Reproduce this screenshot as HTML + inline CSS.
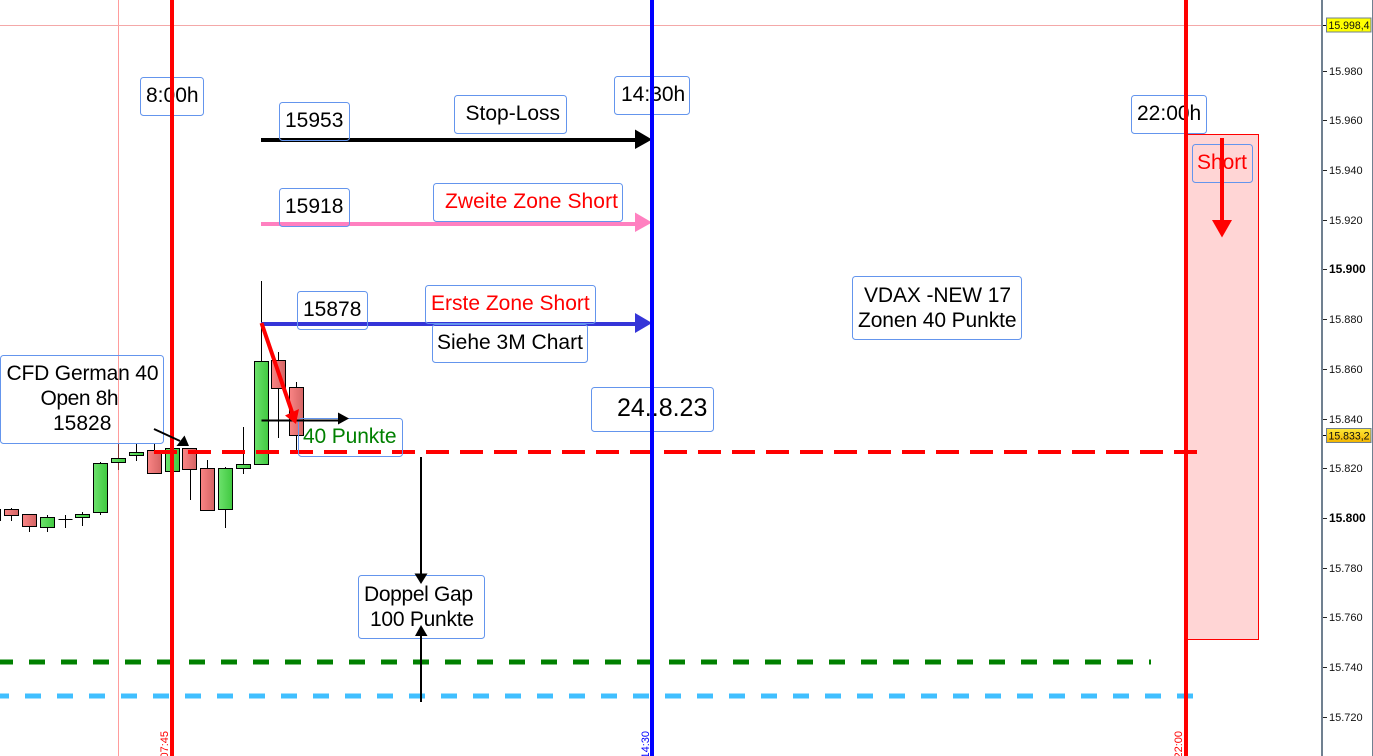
<!DOCTYPE html>
<html><head><meta charset="utf-8"><style>
html,body{margin:0;padding:0;background:#fff;width:1373px;height:756px;overflow:hidden}
svg{display:block;position:absolute;left:0;top:0}
text{font-family:"Liberation Sans",Arial,sans-serif}
.l{font-size:21px;fill:#000}
.r{font-size:21px;fill:#f00}
.a{font-size:11px;fill:#111}
.b{font-size:12px;fill:#000;font-weight:bold}
.box{fill:none;stroke:#6495ed;stroke-width:1}
.c{stroke:#000;stroke-width:1}
.w{stroke:#000;stroke-width:1}
</style></head><body>
<svg width="1373" height="756" viewBox="0 0 1373 756" xmlns="http://www.w3.org/2000/svg">
<defs>
<linearGradient id="gr" x1="0" x2="1" y1="0" y2="0"><stop offset="0" stop-color="#fa8585"/><stop offset="1" stop-color="#d46464"/></linearGradient>
<linearGradient id="gg" x1="0" x2="1" y1="0" y2="0"><stop offset="0" stop-color="#6ce26c"/><stop offset="1" stop-color="#40c840"/></linearGradient>
<linearGradient id="gy" x1="0" x2="0" y1="0" y2="1"><stop offset="0" stop-color="#ffe838"/><stop offset="1" stop-color="#f2b400"/></linearGradient>
</defs>

<!-- crosshair -->
<rect x="118" y="0" width="1" height="756" fill="#ff9c9c"/>
<rect x="0" y="25" width="1322" height="1" fill="#f4a8a8"/>

<!-- right rectangle -->
<rect x="1187.5" y="134.5" width="71" height="505" fill="#ffd5d5" stroke="#f00" stroke-width="1"/>

<!-- wicks -->
<g class="w">
<line x1="0.5" y1="509" x2="0.5" y2="521"/>
<line x1="11.5" y1="508" x2="11.5" y2="521"/>
<line x1="29.5" y1="515" x2="29.5" y2="532"/>
<line x1="47.5" y1="515" x2="47.5" y2="532"/>
<line x1="65.5" y1="515" x2="65.5" y2="528"/>
<line x1="82.5" y1="512" x2="82.5" y2="526"/>
<line x1="100.5" y1="462" x2="100.5" y2="515"/>
<line x1="118.5" y1="443" x2="118.5" y2="470" stroke="#8a3030"/>
<line x1="136.5" y1="443" x2="136.5" y2="461"/>
<line x1="154.5" y1="443" x2="154.5" y2="451"/>
<line x1="190.5" y1="449" x2="190.5" y2="500"/>
<line x1="207.5" y1="460" x2="207.5" y2="469"/>
<line x1="225.5" y1="467" x2="225.5" y2="528"/>
<line x1="243.5" y1="427" x2="243.5" y2="474"/>
<line x1="261.5" y1="281" x2="261.5" y2="362"/>
<line x1="278.5" y1="352" x2="278.5" y2="438"/>
<line x1="296.5" y1="382" x2="296.5" y2="450"/>
</g>
<!-- bodies -->
<g class="c">
<rect x="4.5" y="509.5" width="14" height="6" fill="url(#gr)"/>
<rect x="22.5" y="514.5" width="14" height="12" fill="url(#gr)"/>
<rect x="40.5" y="517.5" width="14" height="10" fill="url(#gg)"/>
<rect x="58.5" y="519" width="14" height="1" fill="#000" stroke="none"/>
<rect x="75.5" y="514.5" width="14" height="3" fill="url(#gg)"/>
<rect x="93.5" y="463.5" width="14" height="49" fill="url(#gg)"/>
<rect x="111.5" y="458.5" width="14" height="4" fill="url(#gg)"/>
<rect x="129.5" y="452.5" width="14" height="3" fill="url(#gg)"/>
<rect x="147.5" y="450.5" width="14" height="23" fill="url(#gr)"/>
<rect x="165.5" y="448.5" width="14" height="23" fill="url(#gg)"/>
<rect x="182.5" y="448.5" width="14" height="21" fill="url(#gr)"/>
<rect x="200.5" y="468.5" width="14" height="42" fill="url(#gr)"/>
<rect x="218.5" y="468.5" width="14" height="41" fill="url(#gg)"/>
<rect x="236.5" y="464.5" width="14" height="4" fill="url(#gg)"/>
<rect x="254.5" y="361.5" width="14" height="103" fill="url(#gg)"/>
<rect x="271.5" y="360.5" width="14" height="28" fill="url(#gr)"/>
<rect x="289.5" y="387.5" width="14" height="48" fill="url(#gr)"/>
</g>

<!-- dashed lines -->
<line x1="154" y1="452" x2="1197" y2="452" stroke="#f00" stroke-width="4" stroke-dasharray="23 11"/>
<line x1="-3" y1="662" x2="1151" y2="662" stroke="#008000" stroke-width="5" stroke-dasharray="16 16"/>
<line x1="-7" y1="696" x2="1193" y2="696" stroke="#40bfff" stroke-width="5" stroke-dasharray="16 16"/>

<!-- horizontal arrows -->
<rect x="261" y="138" width="376" height="4" fill="#000"/>
<polygon points="635,129.5 652,139.5 635,149" fill="#000"/>
<rect x="261" y="222" width="376" height="4" fill="#ff80c0"/>
<polygon points="635,212.5 652,222.5 635,232" fill="#ff80c0"/>
<rect x="261" y="322" width="376" height="4" fill="#3535d8"/>
<polygon points="635,313 652,323 635,333" fill="#3535d8"/>

<!-- boxes -->
<g class="box">
<rect x="140.5" y="77.5" width="63" height="38" rx="3"/>
<rect x="614.5" y="76.5" width="75" height="38" rx="3"/>
<rect x="1131.5" y="95.5" width="75" height="38" rx="3"/>
<rect x="279.5" y="102.5" width="70" height="38" rx="3"/>
<rect x="454.5" y="95.5" width="112" height="38" rx="3"/>
<rect x="279.5" y="188.5" width="70" height="38" rx="3"/>
<rect x="433.5" y="183.5" width="189" height="38" rx="3"/>
<rect x="297.5" y="291.5" width="70" height="38" rx="3"/>
<rect x="425.5" y="285.5" width="170" height="38" rx="3"/>
<rect x="432.5" y="324.5" width="155" height="38" rx="3"/>
<rect x="852.5" y="276.5" width="169" height="63" rx="3"/>
<rect x="591.5" y="387.5" width="122" height="44" rx="3"/>
<rect x="0.5" y="355.5" width="163" height="88" rx="3"/>
<rect x="298.5" y="418.5" width="104" height="38" rx="3"/>
<rect x="358.5" y="575.5" width="126" height="63" rx="3"/>
<rect x="1192.5" y="144.5" width="60" height="38" rx="3"/>
</g>

<!-- texts -->
<text class="l" x="146" y="102">8:00h</text>
<text class="l" x="621" y="101">14:30h</text>
<text class="l" x="1137" y="120">22:00h</text>
<text class="l" x="285" y="127">15953</text>
<text class="l" x="465.5" y="120">Stop-Loss</text>
<text class="l" x="285" y="213">15918</text>
<text class="r" x="445" y="208" textLength="173" lengthAdjust="spacing">Zweite Zone Short</text>
<text class="l" x="303" y="316">15878</text>
<text class="r" x="431" y="310">Erste Zone Short</text>
<text class="l" x="437" y="349">Siehe 3M Chart</text>
<text class="l" x="864" y="302" textLength="147" lengthAdjust="spacing">VDAX -NEW 17</text>
<text class="l" x="858" y="327" textLength="158.5" lengthAdjust="spacing">Zonen 40 Punkte</text>
<text x="617" y="416" style="font-size:25px;fill:#000">24..8.23</text>
<text class="l" x="6.5" y="380" textLength="152" lengthAdjust="spacing">CFD German 40</text>
<text class="l" x="40.5" y="405" textLength="78" lengthAdjust="spacing">Open 8h</text>
<text class="l" x="53" y="430">15828</text>
<text x="303" y="443" textLength="93.5" lengthAdjust="spacing" style="font-size:21px;fill:#008000">40 Punkte</text>
<text class="l" x="364" y="601" textLength="109" lengthAdjust="spacing">Doppel Gap</text>
<text class="l" x="370" y="626" textLength="104" lengthAdjust="spacing">100 Punkte</text>
<text class="r" x="1197" y="169" textLength="50" lengthAdjust="spacing">Short</text>

<!-- vertical lines -->
<rect x="170" y="0" width="4" height="756" fill="#f00"/>
<rect x="650" y="0" width="4" height="756" fill="#00f"/>
<rect x="1184" y="0" width="4" height="756" fill="#f00"/>

<!-- small arrows -->
<line x1="154" y1="429" x2="180" y2="441" stroke="#000" stroke-width="2"/>
<polygon points="184.5,435.5 176.5,446 189,446" fill="#000"/>
<line x1="261.5" y1="420.5" x2="340" y2="420.5" stroke="#000" stroke-width="2"/>
<polygon points="338,412.5 349,418.5 338,424.5" fill="#000"/>
<line x1="261.5" y1="323" x2="293" y2="415" stroke="#f00" stroke-width="4"/>
<polygon points="296,424 285,415.5 299,409" fill="#f00"/>
<rect x="1220" y="138" width="4" height="84" fill="#f00"/>
<polygon points="1212,220 1232,220 1222,237.5" fill="#f00"/>
<rect x="420" y="457" width="2" height="118" fill="#000"/>
<polygon points="414.5,573.5 427.5,573.5 421,584" fill="#000"/>
<rect x="420" y="634" width="2" height="68" fill="#000"/>
<polygon points="415,636 427.5,636 421,625" fill="#000"/>

<!-- time labels -->
<text transform="translate(168,731) rotate(-90)" text-anchor="end" style="font-size:11px;fill:#f00">07:45</text>
<text transform="translate(649,731) rotate(-90)" text-anchor="end" style="font-size:11px;fill:#00f">14:30</text>
<text transform="translate(1182,731) rotate(-90)" text-anchor="end" style="font-size:11px;fill:#f00">22:00</text>

<!-- axis -->
<rect x="1321" y="0" width="2" height="756" fill="#708090"/>
<rect x="1372" y="0" width="1" height="756" fill="#708090"/>
<g fill="#222">
<rect x="1323" y="71" width="4" height="1"/><rect x="1323" y="120" width="4" height="1"/>
<rect x="1323" y="170" width="4" height="1"/><rect x="1323" y="220" width="4" height="1"/>
<rect x="1323" y="269" width="4" height="1"/><rect x="1323" y="319" width="4" height="1"/>
<rect x="1323" y="369" width="4" height="1"/><rect x="1323" y="419" width="4" height="1"/>
<rect x="1323" y="468" width="4" height="1"/><rect x="1323" y="518" width="4" height="1"/>
<rect x="1323" y="568" width="4" height="1"/><rect x="1323" y="617" width="4" height="1"/>
<rect x="1323" y="667" width="4" height="1"/><rect x="1323" y="717" width="4" height="1"/>
<rect x="1323" y="25" width="4" height="1" fill="#000"/><rect x="1323" y="435" width="4" height="1" fill="#000"/>
</g>
<text class="a" x="1329" y="25">16.000</text>
<text class="a" x="1329" y="75">15.980</text>
<text class="a" x="1329" y="124">15.960</text>
<text class="a" x="1329" y="174">15.940</text>
<text class="a" x="1329" y="224">15.920</text>
<text class="b" x="1329" y="273">15.900</text>
<text class="a" x="1329" y="323">15.880</text>
<text class="a" x="1329" y="373">15.860</text>
<text class="a" x="1329" y="423">15.840</text>
<text class="a" x="1329" y="472">15.820</text>
<text class="b" x="1329" y="522">15.800</text>
<text class="a" x="1329" y="572">15.780</text>
<text class="a" x="1329" y="621">15.760</text>
<text class="a" x="1329" y="671">15.740</text>
<text class="a" x="1329" y="721">15.720</text>

<rect x="1326.5" y="18" width="44.5" height="14" fill="#ffff00" stroke="#708090" stroke-width="1"/>
<text x="1328.5" y="29" textLength="41" lengthAdjust="spacingAndGlyphs" style="font-size:11px;fill:#111">15.998,4</text>
<rect x="1326.5" y="428.5" width="44.5" height="14" fill="url(#gy)" stroke="#708090" stroke-width="1"/>
<text x="1328.5" y="439.5" textLength="41" lengthAdjust="spacingAndGlyphs" style="font-size:11px;fill:#111">15.833,2</text>
</svg>
</body></html>
